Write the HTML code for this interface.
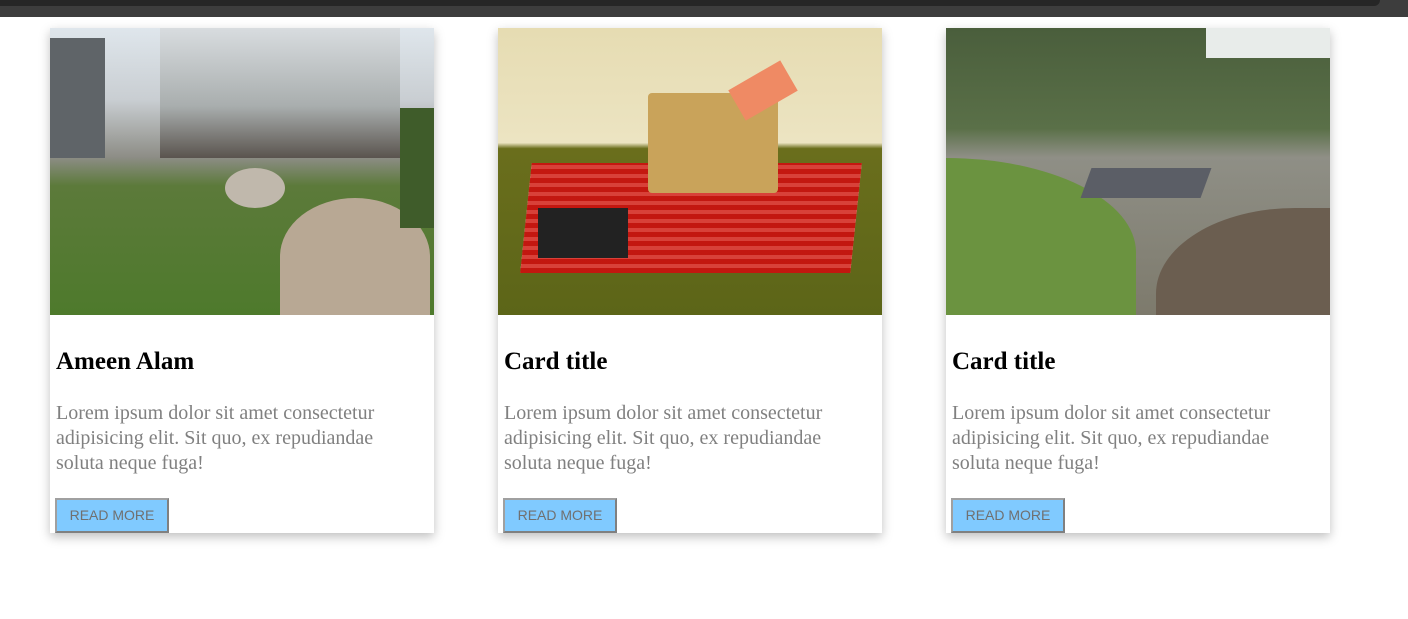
<!DOCTYPE html>
<html><head><style>
body{margin:0;background:#fff;width:1408px;height:619px;overflow:hidden;position:relative;font-family:"Liberation Serif",serif}
.bar1{position:absolute;left:0;top:0;width:1408px;height:17px;background:#3d3d3d}
.bar2{position:absolute;left:0;top:0;width:1380px;height:6px;background:#262626;border-bottom-right-radius:6px}
.card{position:absolute;top:28px;width:384px;height:505px;background:#fff;box-shadow:0 4px 10px rgba(0,0,0,.25)}
.img{position:absolute;left:0;top:0;width:384px;height:287px;overflow:hidden}
h2{position:absolute;left:6px;top:320px;margin:0;font-size:25px;line-height:28px;font-weight:bold;color:#000}
p{position:absolute;left:6px;top:373px;margin:0;width:350px;font-size:20px;line-height:25px;color:#808080}
.btn{position:absolute;left:5px;top:470px;width:114px;height:35px;box-sizing:border-box;background:#80caff;border:2px solid #808080;border-top-color:#a0a0a0;border-left-color:#a0a0a0;font:14px "Liberation Sans",sans-serif;color:#707070;text-align:center;line-height:31px}
</style></head><body>
<div class="bar1"></div><div class="bar2"></div>

<div class="card" style="left:50px">
<div class="img" style="background:linear-gradient(180deg,#dfe6ec 0%,#c9ced2 25%,#8d8d86 45%,#5c7a3a 55%,#4e7a2c 100%)">
<div style="position:absolute;left:110px;top:0;width:240px;height:130px;background:linear-gradient(180deg,#d8dcdf,#a9aeae 60%,#5a544e)"></div>
<div style="position:absolute;left:0;top:10px;width:55px;height:120px;background:#5f6468"></div>
<div style="position:absolute;left:230px;top:170px;width:150px;height:117px;border-radius:50% 50% 0 0;background:#b8a894"></div>
<div style="position:absolute;left:175px;top:140px;width:60px;height:40px;border-radius:50%;background:#c0b8ac"></div>
<div style="position:absolute;left:350px;top:80px;width:34px;height:120px;background:#3f5c2a"></div>
</div>
<h2>Ameen Alam</h2>
<p>Lorem ipsum dolor sit amet consectetur adipisicing elit. Sit quo, ex repudiandae soluta neque fuga!</p>
<div class="btn">READ MORE</div></div>

<div class="card" style="left:498px">
<div class="img" style="background:linear-gradient(180deg,#e6dcb2 0%,#ece4c2 40%,#6a6e1c 42%,#5c6518 100%)">
<div style="position:absolute;left:28px;top:135px;width:330px;height:110px;transform:skewX(-6deg);background:repeating-linear-gradient(0deg,#e53d3d 0 5px,#fff 5px 9px),#e53d3d;opacity:.9;background-blend-mode:multiply"></div>
<div style="position:absolute;left:150px;top:65px;width:130px;height:100px;background:#c9a35a;border-radius:4px"></div>
<div style="position:absolute;left:235px;top:45px;width:60px;height:35px;background:#ef8a64;transform:rotate(-30deg)"></div>
<div style="position:absolute;left:40px;top:180px;width:90px;height:50px;background:#222"></div>
</div>
<h2>Card title</h2>
<p>Lorem ipsum dolor sit amet consectetur adipisicing elit. Sit quo, ex repudiandae soluta neque fuga!</p>
<div class="btn">READ MORE</div></div>

<div class="card" style="left:946px">
<div class="img" style="background:linear-gradient(180deg,#4a5e3c 0%,#5a7048 35%,#8f8f86 45%,#7d7a6c 100%)">
<div style="position:absolute;left:0;top:130px;width:190px;height:157px;background:#6b9340;border-top-right-radius:100% 60%"></div>
<div style="position:absolute;left:140px;top:140px;width:120px;height:30px;background:#5b5e66;transform:skewX(-20deg)"></div>
<div style="position:absolute;left:260px;top:0;width:124px;height:30px;background:#e8ecea"></div>
<div style="position:absolute;left:210px;top:180px;width:174px;height:107px;background:#6b5e50;border-top-left-radius:80%"></div>
</div>
<h2>Card title</h2>
<p>Lorem ipsum dolor sit amet consectetur adipisicing elit. Sit quo, ex repudiandae soluta neque fuga!</p>
<div class="btn">READ MORE</div></div>
</body></html>
